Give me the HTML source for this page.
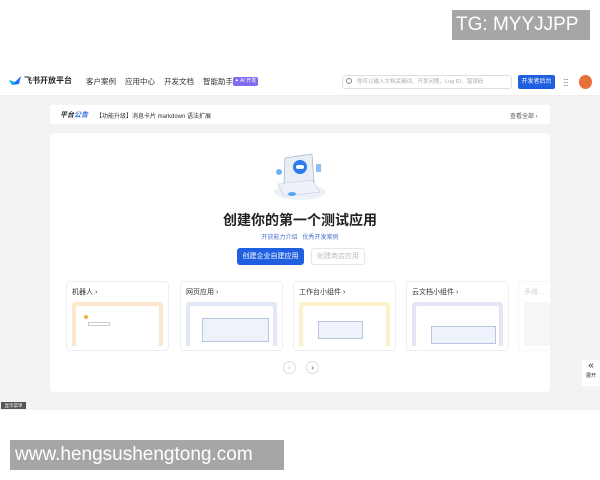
<!DOCTYPE html>
<html><head><meta charset="utf-8"><style>
*{margin:0;padding:0;box-sizing:border-box}
body{width:600px;height:480px;background:#fff;font-family:"Liberation Sans","Noto Sans CJK SC",sans-serif;position:relative;overflow:hidden;color:#1f2329}
.abs{position:absolute}
.gray{background:#f2f3f5}
.card{position:absolute;top:281px;width:103px;height:70px;background:#fff;border:1px solid #eceef2;border-radius:4px}
.card .t{position:absolute;left:5px;top:5px;font-size:7px;color:#333}
.card .p{position:absolute;left:5px;right:5px;top:20px;bottom:4px;border-radius:3px 3px 0 0}
.card .in{position:absolute;left:4px;right:4px;top:4px;bottom:0;background:#fff;border-radius:2px}
</style></head><body>
<div class="abs" style="left:452px;top:10px;width:138px;height:30px;background:#a6a6a6;color:#fff;font-size:19px;line-height:30px;padding-left:4px">TG: MYYJJPP</div>

<div class="abs" style="left:0;top:66px;width:600px;height:30px;background:#fff;border-bottom:1px solid #eee"></div>
<svg class="abs" style="left:9px;top:76px" width="12" height="10"><path d="M0 4 L6 6 L12 0 L10 8 L3 9Z" fill="#1e6fff"/><path d="M0 4 L6 6 L4 9Z" fill="#00c8d4"/></svg>
<div class="abs" style="left:24px;top:75px;font-size:8px;font-weight:bold">飞书开放平台</div>
<div class="abs" style="left:86px;top:76px;font-size:7.5px;color:#333">客户案例</div>
<div class="abs" style="left:125px;top:76px;font-size:7.5px;color:#333">应用中心</div>
<div class="abs" style="left:164px;top:76px;font-size:7.5px;color:#333">开发文档</div>
<div class="abs" style="left:203px;top:76px;font-size:7.5px;color:#333">智能助手</div>
<div class="abs" style="left:233px;top:77px;width:25px;height:9px;background:#7f6af0;border-radius:2px;color:#fff;font-size:5px;line-height:9px;text-align:center">✦ AI 开发</div>
<div class="abs" style="left:342px;top:75px;width:170px;height:14px;border:1px solid #dcdfe4;border-radius:3px;font-size:5.5px;color:#aaa;line-height:12px;padding-left:14px">你可以输入文档关键词、开发问题、Log ID、错误码</div>
<div class="abs" style="left:346px;top:78px;width:6px;height:6px;border:1px solid #888;border-radius:50%"></div>
<div class="abs" style="left:518px;top:75px;width:37px;height:14px;background:#1f5fe0;border-radius:2px;color:#fff;font-size:6px;line-height:14px;text-align:center">开发者后台</div>
<div class="abs" style="left:563px;top:78px;font-size:8px;color:#555;letter-spacing:-1px;line-height:3px">···<br>···<br>···</div>
<div class="abs" style="left:579px;top:75px;width:13px;height:14px;border-radius:50%;background:#e8703a"></div>

<div class="abs gray" style="left:0;top:96px;width:600px;height:314px"></div>
<div class="abs" style="left:50px;top:105px;width:500px;height:19px;background:#fff;border-radius:3px"></div>
<div class="abs" style="left:60px;top:110px;font-size:7px;font-weight:bold;font-style:italic">平台<span style="color:#3a6fe0">公告</span></div>
<div class="abs" style="left:96px;top:111px;font-size:6px;color:#333">【功能升级】消息卡片 markdown 语法扩展</div>
<div class="abs" style="left:510px;top:111px;font-size:6px;color:#555">查看全部 ›</div>

<div class="abs" style="left:50px;top:133px;width:500px;height:259px;background:#fff;border-radius:4px"></div>
<svg class="abs" style="left:270px;top:150px" width="60" height="52">
<ellipse cx="30" cy="42" rx="26" ry="8" fill="#eef2f8"/>
<path d="M15 8 L42 4 L44 32 L14 34Z" fill="#e9eef6" stroke="#a8b8d0" stroke-width="0.8"/>
<path d="M8 34 L42 30 L50 42 L14 46Z" fill="#eef2f8" stroke="#c0cbe0" stroke-width="0.6"/>
<circle cx="30" cy="17" r="7" fill="#2a7cf0"/><rect x="26" y="15" width="8" height="4" rx="2" fill="#fff"/>
<circle cx="9" cy="22" r="3" fill="#6ab2f5"/><rect x="46" y="14" width="5" height="8" fill="#8cc0f5"/>
<ellipse cx="22" cy="44" rx="4" ry="2" fill="#5aa8f2"/>
</svg>
<div class="abs" style="left:0;width:600px;top:210px;text-align:center;font-size:14px;font-weight:600;color:#222">创建你的第一个测试应用</div>
<div class="abs" style="left:0;width:600px;top:232px;text-align:center;font-size:6px;color:#4a6fd0">开放能力介绍 &nbsp; 优秀开发案例</div>
<div class="abs" style="left:237px;top:248px;width:67px;height:17px;background:#1f5fe0;border-radius:3px;color:#fff;font-size:7px;line-height:17px;text-align:center">创建企业自建应用</div>
<div class="abs" style="left:311px;top:248px;width:54px;height:17px;border:1px solid #e4e6ea;border-radius:3px;color:#bbb;font-size:7px;line-height:15px;text-align:center">创建商店应用</div>

<div class="card" style="left:66px"><div class="t">机器人 ›</div><div class="p" style="background:#fbe8cc"><div class="in"><div class="abs" style="left:8px;top:9px;width:4px;height:4px;border-radius:50%;background:#f0b040"></div><div class="abs" style="left:12px;top:16px;width:22px;height:4px;border:1px solid #ccc"></div></div></div></div>
<div class="card" style="left:180px"><div class="t">网页应用 ›</div><div class="p" style="background:#e2e8f7"><div class="in"><div class="abs" style="left:12px;top:12px;right:4px;bottom:4px;border:1px solid #b8c4e0;background:#eef2fb"></div></div></div></div>
<div class="card" style="left:293px"><div class="t">工作台小组件 ›</div><div class="p" style="background:#fbf2cc"><div class="in"><div class="abs" style="left:15px;top:15px;width:45px;height:18px;border:1px solid #b8c4e0;background:#eef2fb"></div></div></div></div>
<div class="card" style="left:406px"><div class="t">云文档小组件 ›</div><div class="p" style="background:#e4e4f8"><div class="in"><div class="abs" style="left:15px;top:20px;width:65px;height:18px;border:1px solid #b8c4e0;background:#eef2fb"></div></div></div></div>
<div class="card" style="left:518px;width:32px;border-right:none;opacity:.5"><div class="t" style="color:#aaa">多维...</div><div class="p" style="background:#eee;right:0"></div></div>

<div class="abs" style="left:283px;top:361px;width:13px;height:13px;border:1px solid #ddd;border-radius:50%;font-size:8px;color:#bbb;text-align:center;line-height:11px">‹</div>
<div class="abs" style="left:306px;top:361px;width:13px;height:13px;border:1px solid #ddd;border-radius:50%;font-size:8px;color:#444;text-align:center;line-height:11px">›</div>
<div class="abs" style="left:582px;top:360px;width:18px;height:26px;background:#fff;font-size:10px;text-align:center;line-height:12px">«<div style="font-size:5px;line-height:8px">展开</div></div>
<div class="abs" style="left:1px;top:402px;width:25px;height:7px;background:#555;color:#fff;font-size:4.5px;line-height:7px;text-align:center">显示菜单</div>

<div class="abs" style="left:10px;top:440px;width:274px;height:30px;background:#a6a6a6;color:#fff;font-size:19px;line-height:30px;padding-left:5px">www.hengsushengtong.com</div>
</body></html>
